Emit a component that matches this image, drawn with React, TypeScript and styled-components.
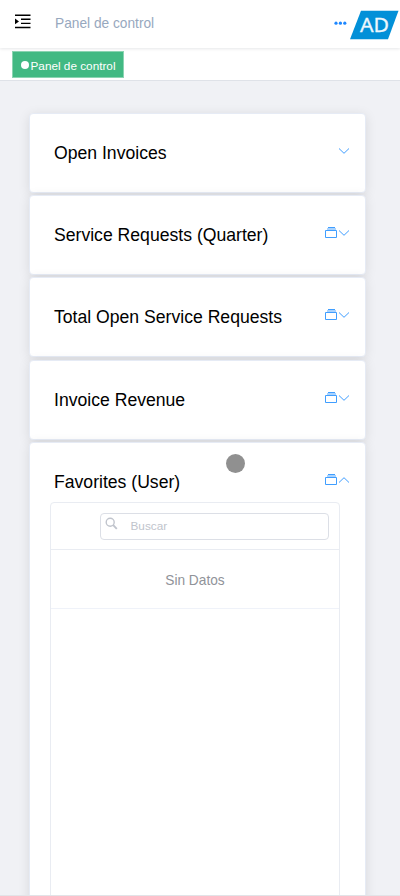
import React from "react";
import styled, { createGlobalStyle } from "styled-components";

const GlobalStyle = createGlobalStyle`
  * { box-sizing: border-box; }
  html, body { margin: 0; padding: 0; }
  body { font-family: "Liberation Sans", Arial, sans-serif; background: #f0f1f5; overflow: hidden; }
`;

const Page = styled.div`
  position: relative;
  width: 400px;
  height: 896px;
  overflow: hidden;
  display: flex;
  flex-direction: column;
  background: #f0f1f5;
  border-bottom: 1px solid #e2e3e7;
`;

const Navbar = styled.header`
  height: 48px;
  flex: none;
  display: flex;
  align-items: flex-start;
  background: #fff;
  box-shadow: 0 1px 3px rgba(0, 21, 41, 0.1);
  position: relative;
`;

const Hamburger = styled.svg`
  width: 16px;
  height: 15px;
  margin: 14px 0 0 15px;
`;

const Breadcrumb = styled.span`
  margin: 16px 0 0 24px;
  font-size: 13.72px;
  line-height: 16px;
  color: #97a8be;
`;

const MoreDots = styled.svg`
  width: 14px;
  height: 6px;
  margin: 20px 0 0 auto;
  fill: #1d87ff;
`;

const Avatar = styled.svg`
  width: 50px;
  height: 30px;
  margin: 10px 1px 0 2px;
`;

const TagsBar = styled.nav`
  height: 33px;
  flex: none;
  display: flex;
  align-items: flex-start;
  padding: 3px 12px;
  background: #fff;
  border-bottom: 1px solid #dfe2e8;
`;

const Tag = styled.span`
  display: flex;
  align-items: center;
  width: 112px;
  height: 27px;
  padding: 1px 0 0 8px;
  font-size: 11.77px;
  white-space: nowrap;
  color: #fff;
  background: #42b983;
  border: 1px solid #8bd4b2;
`;

const TagDot = styled.i`
  width: 8px;
  height: 8px;
  margin: -1px 1.5px 0 0;
  border-radius: 50%;
  background: #fff;
`;

const Dashboard = styled.main`
  flex: 1;
  min-height: 0;
  display: flex;
  flex-direction: column;
  gap: 2.3px;
  padding: 31.7px 34px 0 29.4px;
`;

const Card = styled.section<{ $open?: boolean }>`
  flex: none;
  height: ${(p) => (p.$open ? "500px" : "80px")};
  padding: 0 14px 0 20.6px;
  background: #fff;
  border: 1px solid #e6ebf5;
  border-radius: 4px;
  box-shadow: 0 2px 12px rgba(0, 0, 0, 0.1);
`;

const CardHeader = styled.header`
  display: flex;
  align-items: center;
  height: 59px;
  padding: 19px 0 0 3px;
`;

const Title = styled.h3`
  flex: 1;
  margin: 0;
  font-size: 17.62px;
  line-height: 20px;
  font-weight: 400;
  color: #000;
`;

const Actions = styled.div`
  display: flex;
  align-items: center;
  margin-top: -4px;
`;

const Glyph = styled.svg`
  width: 13px;
  height: 12px;
  fill: none;
  stroke: #409eff;
  stroke-width: 1;
`;

const TablePanel = styled.div`
  width: 290px;
  height: 440px;
  margin-left: -1px;
  border: 1px solid #e9ecf2;
  border-radius: 4px 4px 0 0;
`;

const SearchRow = styled.div`
  height: 47.5px;
  padding: 10px 10px 0 49px;
  border-bottom: 1px solid #e9ecf2;
`;

const SearchBox = styled.label`
  display: flex;
  align-items: flex-start;
  height: 27px;
  padding: 3px 0 0 4px;
  border: 1px solid #dcdfe6;
  border-radius: 4px;
`;

const SearchIcon = styled.svg`
  width: 13px;
  height: 13px;
  fill: none;
  stroke: #c0c4cc;
`;

const SearchInput = styled.input`
  width: 180px;
  height: 16px;
  margin: 0.5px 0 0 12.5px;
  padding: 0;
  border: 0;
  outline: 0;
  background: transparent;
  font: 11.77px "Liberation Sans", Arial, sans-serif;
  color: #606266;
  &::placeholder { color: #c0c4cc; opacity: 1; }
`;

const EmptyRow = styled.div`
  height: 59px;
  padding-top: 2px;
  display: flex;
  align-items: center;
  justify-content: center;
  font-size: 13.72px;
  color: #909399;
  border-bottom: 1px solid #eff2f9;
`;

const TouchPoint = styled.div`
  position: absolute;
  left: 226px;
  top: 454px;
  width: 19px;
  height: 19px;
  border-radius: 50%;
  background: #909090;
`;

const BoxIcon = () => (
  <Glyph viewBox="0 0 13 12">
    <path d="M.5 3.5h11v7H.5z" />
    <path d="M2 2h9" strokeWidth="2" opacity=".45" />
    <path d="M3 .5h7" />
  </Glyph>
);

const Chevron = ({ up }: { up?: boolean }) => (
  <Glyph viewBox="0 0 13 12">
    <path d={up ? "M1 8.5 6 3.7 11 8.5" : "M1 3.5 6 8.3 11 3.5"} />
  </Glyph>
);

const collapsed = [
  { title: "Open Invoices", box: false },
  { title: "Service Requests (Quarter)", box: true },
  { title: "Total Open Service Requests", box: true },
  { title: "Invoice Revenue", box: true },
];

export default function App() {
  return (
    <Page>
      <GlobalStyle />
      <Navbar>
        <Hamburger viewBox="0 0 16 15">
          <path d="M0 1.2h15.5M6 5.3h9.5M6 9.4h9.5M0 13.5h15.5" stroke="#000" strokeWidth="1.4" />
          <path d="M0 4.5 4 7.4 0 10.3z" />
        </Hamburger>
        <Breadcrumb>Panel de control</Breadcrumb>
        <MoreDots viewBox="0 0 14 6">
          <circle cx="3" cy="3.2" r="1.6" />
          <circle cx="7.4" cy="3.2" r="1.6" />
          <circle cx="11.8" cy="3.2" r="1.6" />
        </MoreDots>
        <Avatar viewBox="0 0 50 30">
          <path d="M12 .8h37.5L39 29.2H1z" fill="#0290d8" />
          <text x="25.5" y="22" textAnchor="middle" fontFamily="Noto Sans, sans-serif" fontSize="20.5" textLength="29" lengthAdjust="spacingAndGlyphs" fill="#eef7fc" stroke="#eef7fc" strokeWidth=".3">AD</text>
        </Avatar>
      </Navbar>
      <TagsBar>
        <Tag><TagDot />Panel de control</Tag>
      </TagsBar>
      <Dashboard>
        {collapsed.map((c) => (
          <Card key={c.title}>
            <CardHeader>
              <Title>{c.title}</Title>
              <Actions>{c.box && <BoxIcon />}<Chevron /></Actions>
            </CardHeader>
          </Card>
        ))}
        <Card $open>
          <CardHeader>
            <Title>Favorites (User)</Title>
            <Actions><BoxIcon /><Chevron up /></Actions>
          </CardHeader>
          <TablePanel>
            <SearchRow>
              <SearchBox>
                <SearchIcon viewBox="0 0 13 13">
                  <circle cx="5.2" cy="5.2" r="4" strokeWidth="1.4" />
                  <path d="m8.2 8.2 3.6 3.6" strokeWidth="1.9" />
                </SearchIcon>
                <SearchInput placeholder="Buscar" />
              </SearchBox>
            </SearchRow>
            <EmptyRow>Sin Datos</EmptyRow>
          </TablePanel>
        </Card>
      </Dashboard>
      <TouchPoint />
    </Page>
  );
}
